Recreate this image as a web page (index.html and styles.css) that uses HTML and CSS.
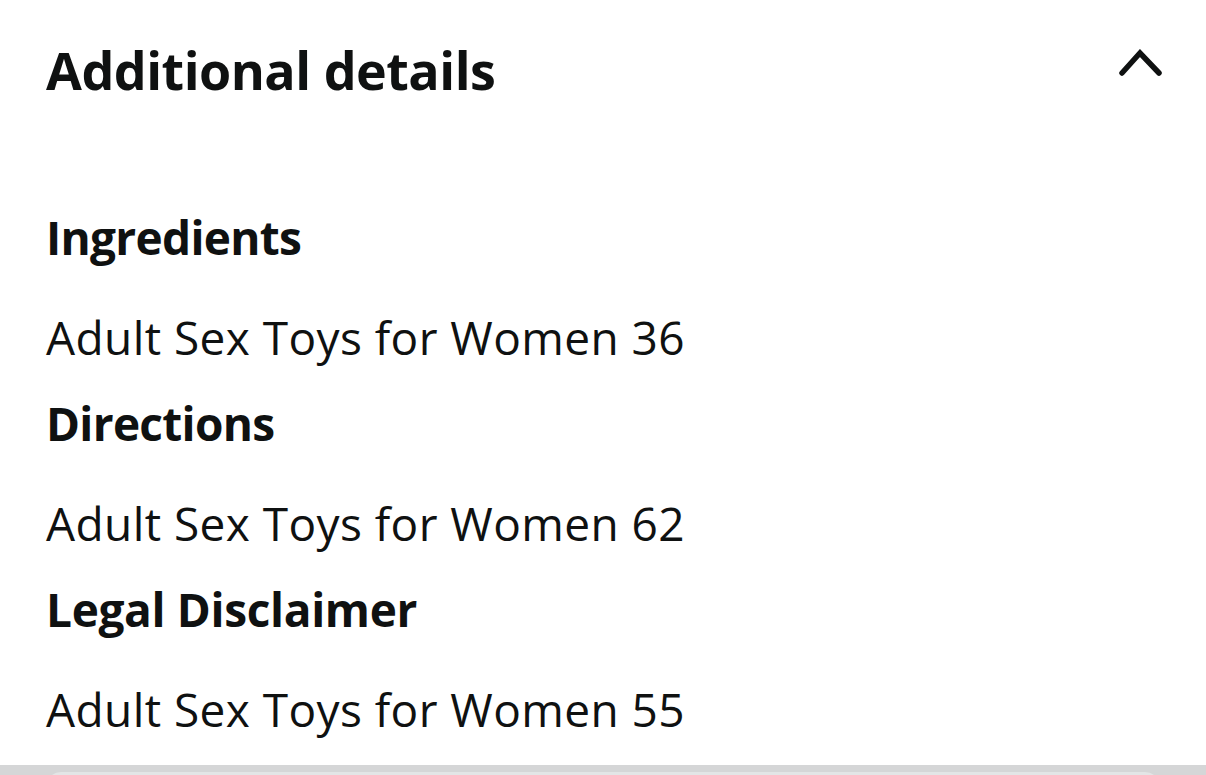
FILE: index.html
```html
<!DOCTYPE html>
<html lang="en">
<head>
  <meta charset="UTF-8">
  <meta name="viewport" content="width=device-width, initial-scale=1.0">
  <title>Additional details</title>
  <link rel="stylesheet" href="styles.css">
</head>
<body>

<div class="details">
  <div class="details-header">
    <h2>Additional details</h2>
    <!-- Collapse chevron -->
    <svg class="chevron" width="44" height="28" viewBox="0 0 44 28">
      <polyline points="4,24 22,4 41,24" fill="none" stroke="#0f1111" stroke-width="5.5" stroke-linecap="round" stroke-linejoin="miter"/>
    </svg>
  </div>

  <div class="details-body">
    <h3>Ingredients</h3>
    <p>Adult Sex Toys for Women 36</p>

    <h3>Directions</h3>
    <p>Adult Sex Toys for Women 62</p>

    <h3 class="legal">Legal Disclaimer</h3>
    <p>Adult Sex Toys for Women 55</p>
  </div>
</div>

<!-- Next card peeking in at the bottom -->
<div class="next-section">
  <div class="next-card"></div>
</div>

</body>
</html>
```
FILE: styles.css
```css
html, body {
  margin: 0;
  padding: 0;
  height: 100%;
  overflow: hidden;
  background-color: white;
}

body {
  font-family: "Open Sans", Arial, sans-serif;
  color: #0f1111;
}

.details {
  padding: 40px 44px 0 46px;
}

.details-header {
  display: flex;
  justify-content: space-between;
  align-items: flex-start;
}

.details-header h2 {
  margin: 0;
  font-size: 52px;
  line-height: 60px;
  font-weight: 700;
  letter-spacing: -0.5px;
}

.chevron {
  margin-top: 9px;
}

.details-body {
  padding-top: 107px;
}

.details-body h3 {
  margin: 0;
  font-size: 46px;
  line-height: 60px;
  font-weight: 700;
  letter-spacing: -0.7px;
}

.details-body h3.legal {
  letter-spacing: -0.35px;
}

.details-body p {
  margin: 40px 0 26px;
  font-size: 46px;
  line-height: 60px;
  letter-spacing: 0.42px;
}

.next-section {
  height: 11px;
  overflow: hidden;
  background-color: #d5d6d7;
  padding: 7px 46px 0;
  box-sizing: border-box;
}

.next-card {
  height: 30px;
  background-color: #e3e5e6;
  border-radius: 24px;
}
```
